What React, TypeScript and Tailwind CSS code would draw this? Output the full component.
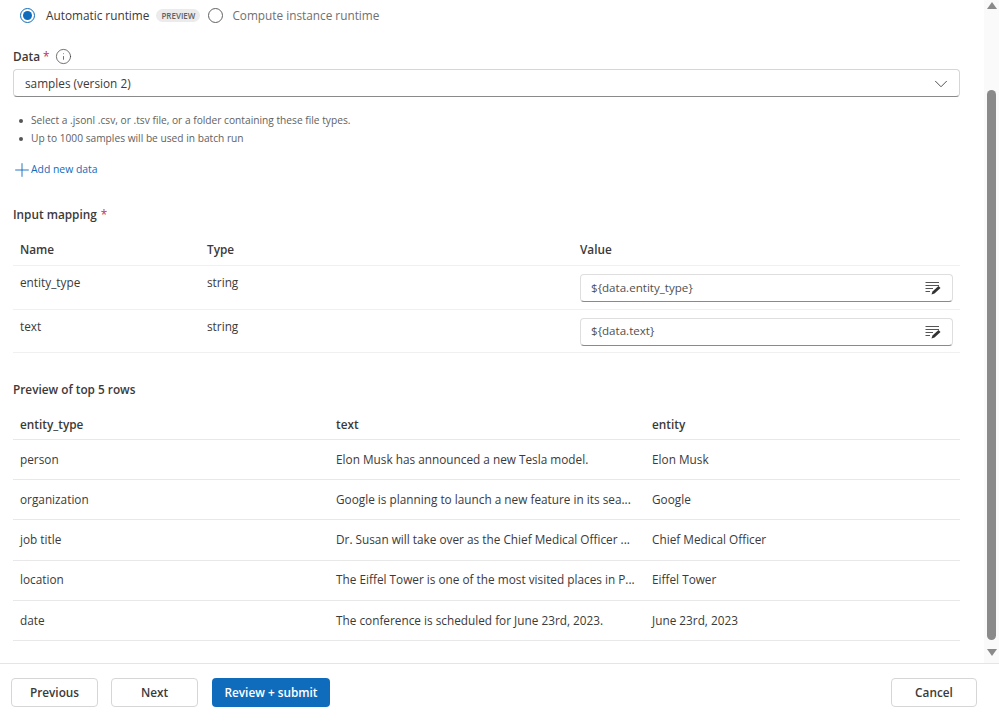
import { ChevronDown, Info, Plus } from "lucide-react";

const mappings = [
  { name: "entity_type", value: "${data.entity_type}" },
  { name: "text", value: "${data.text}" },
];

const rows = [
  ["person", "Elon Musk has announced a new Tesla model.", "Elon Musk"],
  ["organization", "Google is planning to launch a new feature in its sea...", "Google"],
  ["job title", "Dr. Susan will take over as the Chief Medical Officer ...", "Chief Medical Officer"],
  ["location", "The Eiffel Tower is one of the most visited places in P...", "Eiffel Tower"],
  ["date", "The conference is scheduled for June 23rd, 2023.", "June 23rd, 2023"],
];

function EditIcon() {
  return (
    <svg width="16" height="14" viewBox="0 0 16 14" fill="none">
      <path d="M0.5 1.5H14M0.5 4.5H14M0.5 7.5H8M0.5 10.5H5" stroke="#555" strokeWidth="1" />
      <path d="M6.5 13.5L7.5 10.5L13.5 5L15.5 7L9.5 12.5Z" fill="#333" />
    </svg>
  );
}

export default function App() {
  return (
    <div className="w-[999px] h-[727px] bg-white flex flex-col overflow-hidden font-['Open_Sans',sans-serif] text-[11.8px] text-[#3b3a39]">
      <div className="h-[663px] flex">
        <div className="w-[961px] ml-[13px]">
          <div className="h-[31px] flex items-center pl-[7px]">
            <span className="w-[15px] h-[15px] rounded-full border border-[#0f6cbd] flex items-center justify-center">
              <span className="w-[9px] h-[9px] rounded-full bg-[#0f6cbd]" />
            </span>
            <span className="ml-[11px]">Automatic runtime</span>
            <span className="ml-[7px] h-[13px] w-[44px] rounded-full bg-[#ebebeb] text-[8px] font-semibold text-[#616161] flex items-center justify-center">PREVIEW</span>
            <span className="ml-[8px] w-[15px] h-[15px] rounded-full border border-[#616161]" />
            <span className="ml-[9px] text-[#707070]">Compute instance runtime</span>
          </div>
          <div className="mt-[16px] h-[19px] flex items-center font-semibold">
            Data <span className="text-[#c4314b] ml-[3px] font-normal">*</span>
            <Info size={17} strokeWidth={1} className="ml-[5px]" />
          </div>
          <div className="mt-[3px] h-[28px] w-[947px] border border-[#d6d6d6] border-b-[#8a8a8a] rounded-[4px] flex items-center justify-between pl-[11px] pr-[7px]">
            <span className="pt-[2px]">samples (version 2)</span>
            <ChevronDown size={22} strokeWidth={1} className="text-[#424242] mt-[1px]" />
          </div>
          <ul className="mt-[15px] text-[10.2px] text-[#616161]">
            <li className="h-[18px] flex items-center"><span className="w-[4px] h-[4px] rounded-full bg-[#555] ml-[6px] mr-[8px]" />Select a .jsonl .csv, or .tsv file, or a folder containing these file types.</li>
            <li className="h-[18px] flex items-center"><span className="w-[4px] h-[4px] rounded-full bg-[#555] ml-[6px] mr-[8px]" />Up to 1000 samples will be used in batch run</li>
          </ul>
          <div className="mt-[13px] h-[18px] flex items-center text-[10.4px] text-[#0f6cbd]">
            <Plus size={22} strokeWidth={1} className="-ml-[2px] -mr-[2px]" />
            Add new data
          </div>
          <div className="mt-[26px] h-[20px] flex items-center font-semibold">
            Input mapping <span className="text-[#c4314b] ml-[4px] font-normal">*</span>
          </div>
          <div className="w-[947px] mt-[14px]">
            <div className="h-[27px] flex items-center font-semibold border-b border-[#f0f0f0] px-[7px] pb-[4px]">
              <span className="w-[187px]">Name</span>
              <span className="w-[373px]">Type</span>
              <span>Value</span>
            </div>
            {mappings.map((m) => (
              <div key={m.name} className="h-[43.5px] flex items-center border-b border-[#f0f0f0] pl-[7px]">
                <span className="w-[187px] pb-[8px]">{m.name}</span>
                <span className="w-[373px] pb-[8px]">string</span>
                <div className="w-[373px] h-[28px] mt-[2px] border border-[#dedede] border-b-[#8a8a8a] rounded-[4px] flex items-center justify-between pl-[10px] pr-[11px] text-[11.6px] text-[#505050]">
                  <span className="pb-[2px]">{m.value}</span>
                  <EditIcon />
                </div>
              </div>
            ))}
          </div>
          <div className="mt-[27px] h-[20px] flex items-center font-semibold">Preview of top 5 rows</div>
          <div className="w-[947px] mt-[11px]">
            <div className="h-[29px] flex items-center font-semibold border-b border-[#e8e8e8] px-[7px]">
              <span className="w-[316px]">entity_type</span>
              <span className="w-[316px]">text</span>
              <span>entity</span>
            </div>
            {rows.map((r) => (
              <div key={r[0]} className="h-[40.2px] flex items-center border-b border-[#e8e8e8] px-[7px] whitespace-nowrap">
                <span className="w-[316px]">{r[0]}</span>
                <span className="w-[316px]">{r[1]}</span>
                <span>{r[2]}</span>
              </div>
            ))}
          </div>
        </div>
        <div className="ml-auto w-[15px] bg-[#fafafa] flex flex-col items-center">
          <div className="mt-[2px] w-0 h-0 border-x-[5px] border-x-transparent border-b-[7px] border-b-[#8a8a8a]" />
          <div className="mt-[81px] w-[9px] h-[550px] rounded-full bg-[#8a8a8a]" />
          <div className="mt-[9px] w-0 h-0 border-x-[5px] border-x-transparent border-t-[7px] border-t-[#8a8a8a]" />
        </div>
      </div>
      <div className="flex-1 border-t border-[#e5e5e5] flex items-start pt-[14px] pl-[11px] pr-[22px] font-semibold">
        <button className="w-[87px] h-[29px] border border-[#d6d6d6] rounded-[4px]">Previous</button>
        <button className="ml-[13px] w-[87px] h-[29px] border border-[#d6d6d6] rounded-[4px]">Next</button>
        <button className="ml-[14px] w-[118px] h-[29px] rounded-[4px] bg-[#0f6cbd] text-white">Review + submit</button>
        <button className="ml-auto w-[86px] h-[29px] border border-[#d6d6d6] rounded-[4px]">Cancel</button>
      </div>
    </div>
  );
}
